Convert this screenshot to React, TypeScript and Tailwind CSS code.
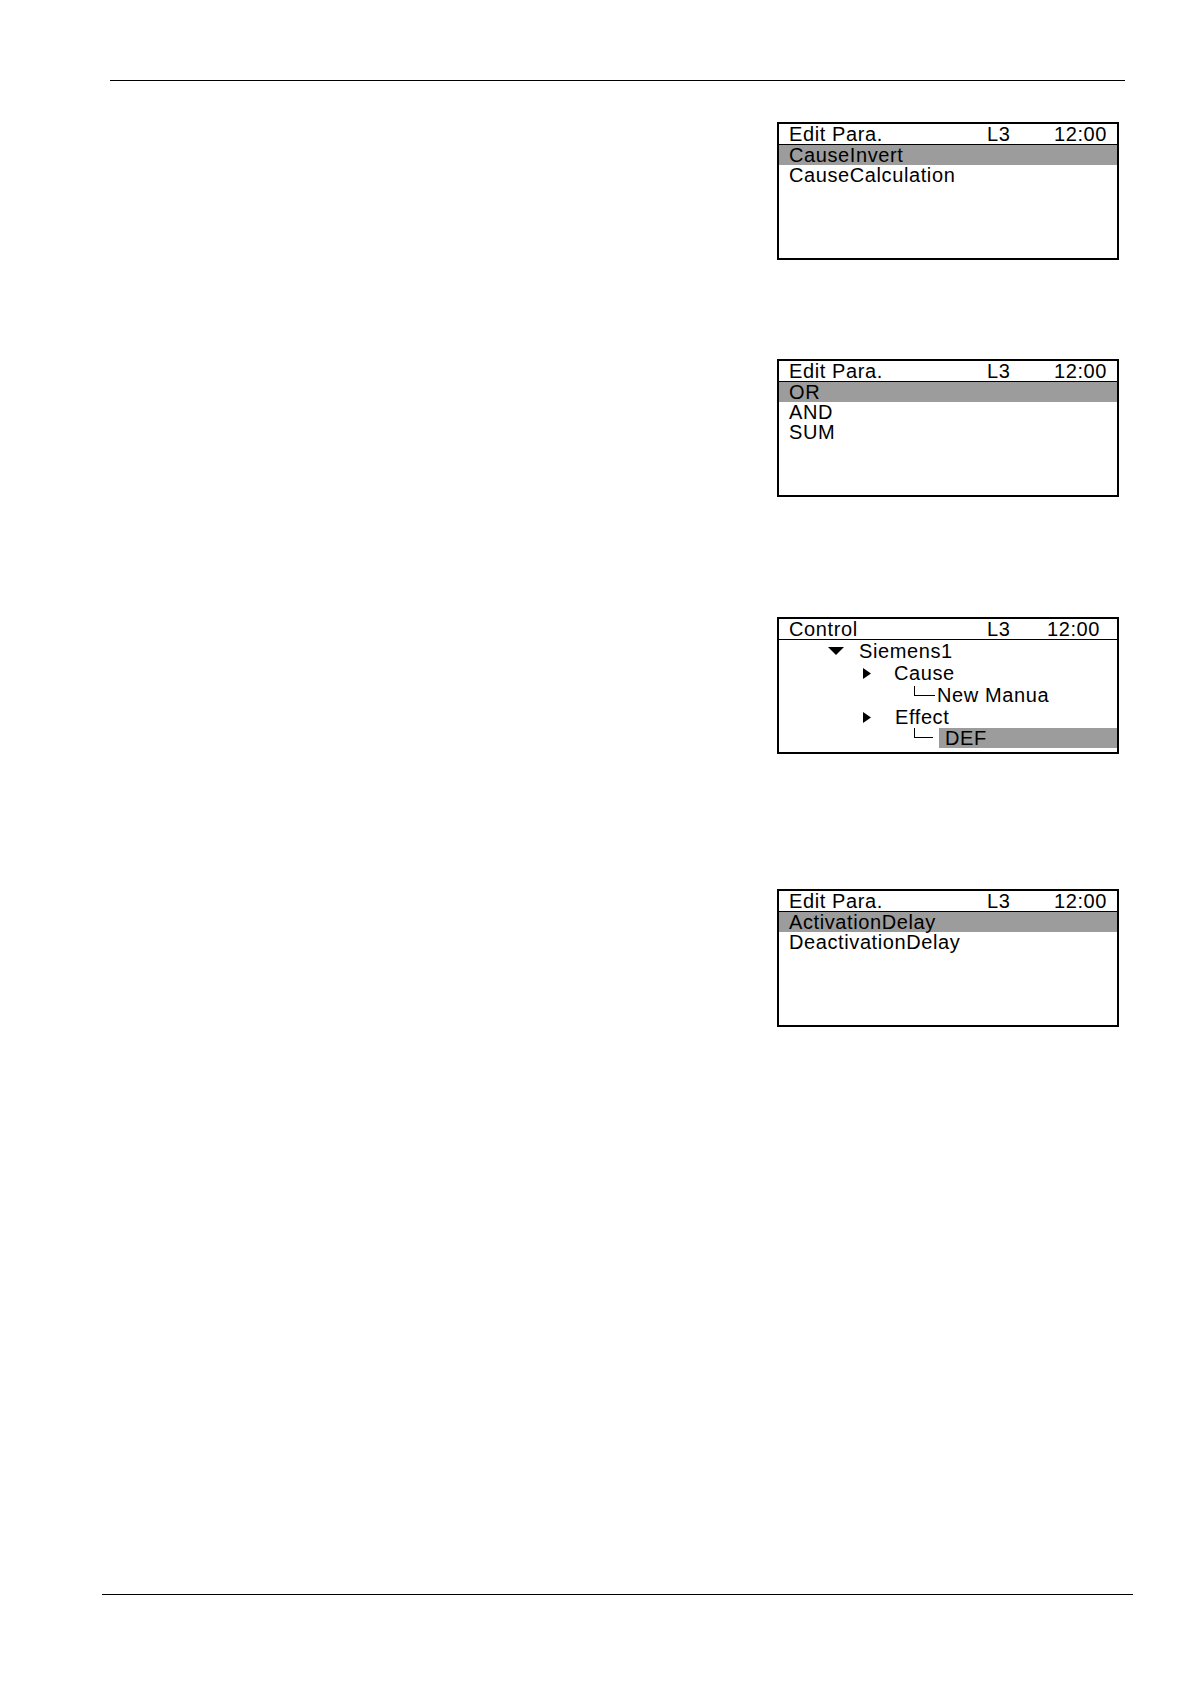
import React from "react";

const font = { fontFamily: '"Liberation Sans", Arial, sans-serif' };

function Header({ title, l3X = 198, timeGap = 67 }: { title: string; l3X?: number; timeGap?: number }) {
  return (
    <>
      <div className="h-[20px] flex leading-[20px] text-[20px] tracking-[0.6px] text-black pl-[10px] whitespace-nowrap">
        <span style={{ width: l3X }} className="shrink-0">{title}</span>
        <span style={{ width: timeGap }} className="shrink-0">L3</span>
        <span>12:00</span>
      </div>
      <div className="h-px bg-black shrink-0" />
    </>
  );
}

function Row({ text, active }: { text: string; active?: boolean }) {
  return (
    <div
      className={
        "h-[20px] leading-[20px] text-[20px] tracking-[0.6px] text-black pl-[10px] whitespace-nowrap " +
        (active ? "bg-[#9c9c9c]" : "")
      }
    >
      {text}
    </div>
  );
}

function ListBox({ items, className }: { items: string[]; className: string }) {
  return (
    <div className={"w-[342px] h-[138px] border-2 border-black flex flex-col " + className} style={font}>
      <Header title="Edit Para." />
      <div className="flex flex-col">
        {items.map((t, i) => (
          <Row key={t} text={t} active={i === 0} />
        ))}
      </div>
    </div>
  );
}

function Down() {
  return (
    <svg width="16" height="8" viewBox="0 0 16 8" className="shrink-0">
      <polygon points="0,0 16,0 8,8" fill="black" />
    </svg>
  );
}

function Right() {
  return (
    <svg width="8" height="11" viewBox="0 0 8 11" className="shrink-0">
      <polygon points="0,0 8,5.5 0,11" fill="black" />
    </svg>
  );
}

function TreeBox({ className }: { className: string }) {
  const row = "h-[22px] flex items-center text-[20px] tracking-[0.6px] text-black whitespace-nowrap leading-[22px]";
  return (
    <div className={"w-[342px] h-[137px] border-2 border-black flex flex-col " + className} style={font}>
      <Header title="Control" l3X={198} timeGap={60} />
      <div className="flex flex-col">
        <div className={row}>
          <span className="w-[49px] shrink-0" />
          <Down />
          <span className="ml-[15px]">Siemens1</span>
        </div>
        <div className={row}>
          <span className="w-[84px] shrink-0" />
          <Right />
          <span className="ml-[23px]">Cause</span>
        </div>
        <div className={row}>
          <span className="w-[135px] shrink-0" />
          <span className="shrink-0 w-[21px] h-[10px] border-l border-b border-black self-start mt-[2px]" />
          <span className="ml-[2px]">New Manua</span>
        </div>
        <div className={row}>
          <span className="w-[84px] shrink-0" />
          <Right />
          <span className="ml-[24px]">Effect</span>
        </div>
        <div className={row + " items-start"}>
          <span className="w-[135px] shrink-0" />
          <span className="shrink-0 w-[19px] h-[10px] border-l border-b border-black" />
          <span className="ml-[6px] flex-1 h-[20px] leading-[20px] bg-[#9c9c9c] pl-[6px]">DEF</span>
        </div>
      </div>
    </div>
  );
}

export default function App() {
  return (
    <div className="w-[1190px] h-[1684px] bg-white flex flex-col pt-[80px]">
      <div className="ml-[110px] w-[1015px] h-px bg-black shrink-0" />
      <div className="ml-[777px] flex flex-col">
        <ListBox className="mt-[41px]" items={["CauseInvert", "CauseCalculation"]} />
        <ListBox className="mt-[99px]" items={["OR", "AND", "SUM"]} />
        <TreeBox className="mt-[120px]" />
        <ListBox className="mt-[135px]" items={["ActivationDelay", "DeactivationDelay"]} />
      </div>
      <div className="ml-[102px] w-[1031px] h-px bg-black shrink-0 mt-[567px]" />
    </div>
  );
}
